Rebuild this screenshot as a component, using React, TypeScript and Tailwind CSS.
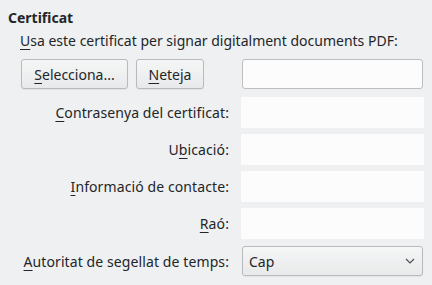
import React from 'react';

const Mn: React.FC<{ c: string }> = ({ c }) => (
  <span className="underline decoration-1 underline-offset-[3px]">{c}</span>
);

const face =
  'h-full rounded-[3px] border border-[#b8babc] bg-gradient-to-b from-[#f5f6f6] to-[#e8e9ea] shadow-[0_1px_1px_rgba(0,0,0,0.06)] flex items-center';

const Row: React.FC<{ label: React.ReactNode; className?: string; children: React.ReactNode }> = ({
  label,
  className,
  children,
}) => (
  <div className={`flex items-center ${className ?? ''}`}>
    <div className="w-[213px] text-right pr-[4px] whitespace-nowrap tracking-[0.1px]">{label}</div>
    <div className="ml-[8px] w-[183px] h-full">{children}</div>
  </div>
);

const App: React.FC = () => {
  return (
    <div className="w-[432px] h-[285px] bg-[#eff0f1] text-[#232629] text-[14px] leading-[19px] font-['Noto_Sans',sans-serif] overflow-hidden">
      <div className="pl-[8px] pt-[8px]">
        <div className="font-bold">Certificat</div>
        <div className="pl-[12px]">
          <div className="mt-[4px] whitespace-nowrap">
            <Mn c="U" />
            sa este certificat per signar digitalment documents PDF:
          </div>

          <div className="flex items-center mt-[9px] h-[30px]">
            <div className="w-[213px] h-full flex gap-[8px] pl-[1px]">
              <button className={`${face} justify-center w-[107px]`}>
                <Mn c="S" />
                elecciona...
              </button>
              <button className={`${face} justify-center w-[68px]`}>
                <Mn c="N" />
                eteja
              </button>
            </div>
            <div className="ml-[8px] w-[183px] h-full px-[1px]">
              <div className="h-full rounded-[3px] border border-[#bcbebf] bg-[#fcfcfc]" />
            </div>
          </div>

          <Row
            className="mt-[8px] h-[31px]"
            label={
              <>
                <Mn c="C" />
                ontrasenya del certificat:
              </>
            }
          >
            <div className="h-full bg-[#fcfcfc]" />
          </Row>
          <Row
            className="mt-[6px] h-[31px]"
            label={
              <>
                U<Mn c="b" />
                icació:
              </>
            }
          >
            <div className="h-full bg-[#fcfcfc]" />
          </Row>
          <Row
            className="mt-[6px] h-[31px]"
            label={
              <>
                <Mn c="I" />
                nformació de contacte:
              </>
            }
          >
            <div className="h-full bg-[#fcfcfc]" />
          </Row>
          <Row
            className="mt-[6px] h-[31px]"
            label={
              <>
                <Mn c="R" />
                aó:
              </>
            }
          >
            <div className="h-full bg-[#fcfcfc]" />
          </Row>
          <Row
            className="mt-[7px] h-[30px]"
            label={
              <>
                <Mn c="A" />
                utoritat de segellat de temps:
              </>
            }
          >
            <div className="h-full px-[1px]">
              <div className={`${face} justify-between pl-[6px] pr-[7px]`}>
                <span>Cap</span>
                <svg width="10" height="6" viewBox="0 0 10 6" fill="none">
                  <path d="M1 1l4 4 4-4" stroke="#4d4f52" strokeWidth="1.2" />
                </svg>
              </div>
            </div>
          </Row>
        </div>
      </div>
    </div>
  );
};

export default App;
